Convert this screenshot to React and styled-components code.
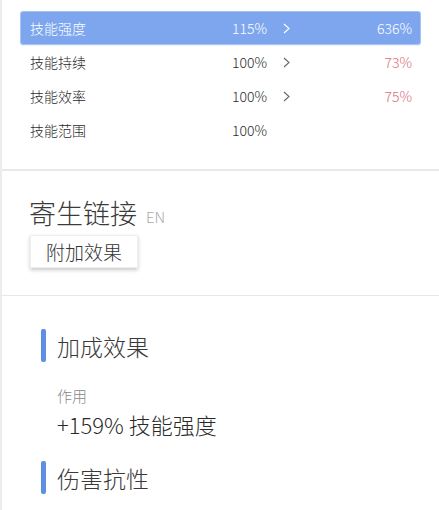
import React from 'react'
import styled, { createGlobalStyle } from 'styled-components'

const GlobalStyle = createGlobalStyle`
    html, body {
        margin: 0;
        padding: 0;
        background: #ffffff;
    }
    body {
        font-family: "Noto Sans CJK SC", "Noto Sans", sans-serif;
        font-weight: 300;
        color: #333;
    }
`;

const Page = styled.div`
    width: 439px;
    height: 510px;
    box-sizing: border-box;
    border-left: 2px solid #ececec;
    overflow: hidden;
    display: flex;
    flex-direction: column;
`;

const StatsPanel = styled.div`
    height: 171px;
    box-sizing: border-box;
    padding: 12px 19px 0 19px;
    border-bottom: 2px solid #e9e9e9;
    display: flex;
    flex-direction: column;
    gap: 2px;
`;

const StatRow = styled.div`
    height: 32px;
    display: flex;
    align-items: center;
    box-sizing: border-box;
    padding: 0 8px 0 9px;
    font-size: 14px;
    border-radius: 2px;
    color: ${p => (p.$active ? '#fff' : '#2a2a2a')};
    background: ${p => (p.$active ? '#7ea6ee' : 'transparent')};
    box-shadow: ${p => (p.$active ? '0 0 0 1px #a8c3f4, 0 1px 2px rgba(80,120,200,0.35)' : 'none')};
`;

const StatName = styled.span`
    width: 202px;
`;

const StatBase = styled.span`
    width: 51px;
`;

const Chevron = styled.span`
    width: 12px;
    display: flex;
    align-items: center;
`;

const StatFinal = styled.span`
    flex: 1;
    text-align: right;
    color: ${p => (p.$active ? '#fff' : '#d9707c')};
`;

const ModPanel = styled.div`
    height: 125px;
    box-sizing: border-box;
    padding: 26px 0 0 27px;
    border-bottom: 1px solid #e6e6e6;
    display: flex;
    flex-direction: column;
    align-items: flex-start;
`;

const ModTitle = styled.div`
    height: 30px;
    display: flex;
    align-items: center;
    gap: 9px;
    font-size: 27px;
    color: #3a3a3a;
`;

const LangTag = styled.span`
    font-size: 15px;
    color: #aaa;
    margin-top: 8px;
`;

const TabButton = styled.div`
    margin-top: 8px;
    margin-left: 1px;
    height: 33px;
    padding: 0 15px;
    display: flex;
    align-items: center;
    font-size: 19px;
    color: #333;
    background: #fff;
    border: 1px solid #efefef;
    box-shadow: 0 2px 4px rgba(0, 0, 0, 0.22);
    box-sizing: border-box;
`;

const EffectPanel = styled.div`
    padding: 33px 0 0 39px;
    display: flex;
    flex-direction: column;
`;

const Heading = styled.div`
    height: 33px;
    display: flex;
    align-items: center;
    gap: 11px;
    font-size: 23px;
    color: #3a3a3a;
    margin-top: ${p => p.$spaced ? '24px' : '0'};

    &::before {
        content: '';
        width: 5px;
        height: 33px;
        border-radius: 2px;
        background: #5e8fe2;
    }
`;

const EffectBody = styled.div`
    padding-left: 16px;
    margin-top: 25px;
    display: flex;
    flex-direction: column;
    gap: 6px;
`;

const EffectLabel = styled.div`
    font-size: 15px;
    line-height: 18px;
    color: #888;
`;

const EffectValue = styled.div`
    font-size: 22px;
    line-height: 26px;
    color: #2a2a2a;
`;

const stats = [
    { name: '技能强度', base: '115%', final: '636%', active: true },
    { name: '技能持续', base: '100%', final: '73%' },
    { name: '技能效率', base: '100%', final: '75%' },
    { name: '技能范围', base: '100%' },
];

function ChevronIcon({ color }) {
    return (
        <svg width="7" height="11" viewBox="0 0 7 11">
            <polyline points="1,1 6,5.5 1,10" fill="none" stroke={color} strokeWidth="1.1" />
        </svg>
    )
}

function App() {
    return (
        <Page>
            <GlobalStyle />

            <StatsPanel>
                {stats.map(s => (
                    <StatRow key={s.name} $active={s.active}>
                        <StatName>{s.name}</StatName>
                        <StatBase>{s.base}</StatBase>
                        <Chevron>
                            {s.final && <ChevronIcon color={s.active ? '#fff' : '#666'} />}
                        </Chevron>
                        <StatFinal $active={s.active}>{s.final}</StatFinal>
                    </StatRow>
                ))}
            </StatsPanel>

            <ModPanel>
                <ModTitle>
                    寄生链接
                    <LangTag>EN</LangTag>
                </ModTitle>
                <TabButton>附加效果</TabButton>
            </ModPanel>

            <EffectPanel>
                <Heading>加成效果</Heading>
                <EffectBody>
                    <EffectLabel>作用</EffectLabel>
                    <EffectValue>+159% 技能强度</EffectValue>
                </EffectBody>
                <Heading $spaced>伤害抗性</Heading>
            </EffectPanel>
        </Page>
    )
}

export default App
